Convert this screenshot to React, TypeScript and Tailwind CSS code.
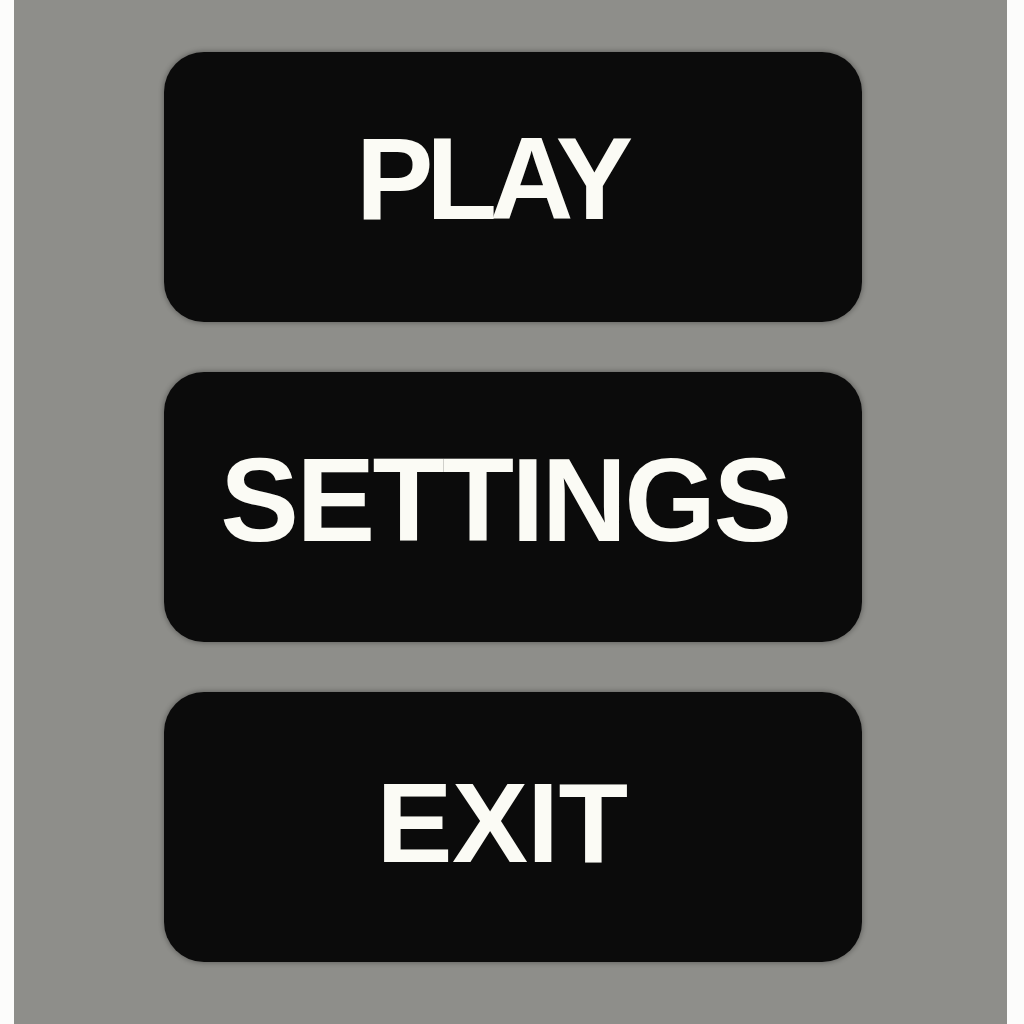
const items = [
  { label: "PLAY", cls: "pb-[16px] pr-[44px] text-[116px] tracking-[-0.062em]" },
  { label: "SETTINGS", cls: "pb-[14px] pr-[16px] text-[118px] tracking-[-0.022em]" },
  { label: "EXIT", cls: "pb-2 pr-[22px] text-[114px] tracking-[-0.005em]" },
];

export default function App() {
  return (
    <div className="flex h-[1024px] w-[1024px] bg-[#fcfcfb] pl-[14px] pr-[17px]">
      <div className="flex flex-1 flex-col gap-[50px] bg-[#8e8e8a] pl-[150px] pr-[145px] pt-[52px]">
        {items.map((it) => (
          <button
            key={it.label}
            className={`flex h-[270px] w-[698px] items-center justify-center rounded-[40px] bg-[#0b0b0b] shadow-[0_0_5px_1px_rgba(0,0,0,0.3)] ${it.cls}`}
          >
            <span className="font-['Liberation_Sans',Arial,sans-serif] font-bold leading-none text-[#fbfbf5]">
              {it.label}
            </span>
          </button>
        ))}
      </div>
    </div>
  );
}
